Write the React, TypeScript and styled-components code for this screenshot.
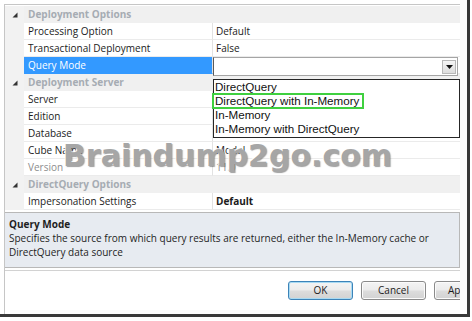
import React from "react";
import styled, { createGlobalStyle } from "styled-components";

const Global = createGlobalStyle`
  * { box-sizing: border-box; }
  body {
    margin: 0;
    background: #fff;
    font-family: "Open Sans", "Noto Sans", sans-serif;
  }
`;

const Frame = styled.div`
  position: relative;
  width: 470px;
  height: 317px;
  padding: 4px 7px 0 4px;
  background: #fff;
  border-right: 3px solid #3a3a3a;
  border-bottom: 3px solid #3a3a3a;
`;

const Dialog = styled.div`
  display: flex;
  flex-direction: column;
  height: 100%;
  border-top: 1px solid #c6c6c6;
  border-left: 1px solid #c6c6c6;
  overflow: hidden;
`;

const Grid = styled.div`
  padding-top: 1px;
  font-size: 10px;
  color: #1b1b1b;
`;

const Row = styled.div`
  display: grid;
  grid-template-columns: 19px 189px 1fr;
  height: 17px;
  line-height: 16px;
`;

const Gutter = styled.div`
  display: flex;
  align-items: center;
  justify-content: center;
  background: #f2f2f2;
`;

const CategoryBar = styled.div`
  grid-column: 2 / 4;
  background: #f0f0f0;
  padding-left: 4px;
  font-weight: 700;
  color: #a6acb3;
`;

const Name = styled.div<{ $selected?: boolean; $muted?: boolean }>`
  padding-left: 4px;
  background: ${(p) => (p.$selected ? "#3399ff" : "#fff")};
  color: ${(p) => (p.$selected ? "#fff" : p.$muted ? "#8d8d8d" : "#1b1b1b")};
  border-bottom: 1px solid ${(p) => (p.$selected ? "#3399ff" : "#ebebeb")};
  border-right: 1px solid #e2e2e2;
  white-space: nowrap;
`;

const Value = styled.div<{ $bold?: boolean; $muted?: boolean }>`
  position: relative;
  padding-left: 3px;
  border-bottom: 1px solid #ebebeb;
  font-weight: ${(p) => (p.$bold ? 700 : 400)};
  color: ${(p) => (p.$muted ? "#8d8d8d" : "#1b1b1b")};
`;

const Combo = styled.div`
  position: absolute;
  left: 0;
  top: 0;
  right: 2px;
  height: 19px;
  background: #fff;
  border: 1px solid #a5a5a5;
  border-left-color: #5a5a5a;
  z-index: 2;
  display: flex;
  justify-content: flex-end;
  align-items: center;
  padding-right: 1px;
`;

const DropButton = styled.div`
  width: 14px;
  height: 14px;
  display: flex;
  align-items: center;
  justify-content: center;
  border: 1px solid #b8b8b8;
  background: linear-gradient(#f6f6f6, #dcdcdc);
`;

const List = styled.div`
  position: absolute;
  left: 0;
  top: 22px;
  width: 247px;
  height: 59px;
  background: #fff;
  border: 1px solid #262626;
  z-index: 3;
  font-family: "Liberation Sans", Arial, sans-serif;
  font-size: 11.6px;
  color: #111;
`;

const Item = styled.div<{ $marked?: boolean }>`
  height: 14px;
  line-height: 14px;
  width: ${(p) => (p.$marked ? "150px" : "auto")};
  margin-left: ${(p) => (p.$marked ? "-1px" : "0")};
  padding-left: ${(p) => (p.$marked ? "2px" : "1px")};
  outline: ${(p) => (p.$marked ? "2px solid #3fd03f" : "none")};
  outline-offset: -1px;
`;

const Description = styled.div`
  margin-top: 2px;
  height: 56px;
  padding: 4px 5px 0 4px;
  background: #e7ebf1;
  border: 1px solid #b8b8b8;
  border-left: none;
  font-size: 10px;
  line-height: 14px;
  color: #1e1e1e;
`;

const DescTitle = styled.div`
  font-weight: 700;
`;

const ButtonBar = styled.div`
  flex: 1;
  margin-top: 2px;
  border-top: 1px solid #d2d2d2;
  display: flex;
  gap: 8px;
  padding: 10px 0 0 283px;
`;

const Button = styled.div<{ $default?: boolean }>`
  flex: none;
  width: 65px;
  height: 19px;
  border: 1px solid ${(p) => (p.$default ? "#3c83b8" : "#8a8a8a")};
  border-radius: 3px;
  background: linear-gradient(#f4f4f4 0%, #ececec 45%, #dcdcdc 55%, #d2d2d2 100%);
  box-shadow: inset 0 0 0 1px ${(p) => (p.$default ? "#a8daf3" : "#fbfbfb")};
  font-size: 10px;
  line-height: 17px;
  text-align: center;
  color: #1b1b1b;
`;

const ApplyButton = styled(Button)`
  text-align: left;
  padding-left: 13px;
`;

const Watermark = styled.div`
  position: absolute;
  left: 63px;
  top: 141px;
  font-family: "DejaVu Sans", sans-serif;
  font-weight: 700;
  font-size: 30px;
  line-height: 30px;
  color: #a6a6a6;
  text-shadow: -1px -1px 0 rgba(255, 255, 255, 0.85), 1px 1px 1px rgba(80, 80, 80, 0.55);
  pointer-events: none;
  white-space: nowrap;
  z-index: 5;
`;

const Expander = () => (
  <svg width="6" height="6" viewBox="0 0 6 6">
    <polygon points="5.5,0.5 5.5,5.5 0.5,5.5" fill="#333" />
  </svg>
);

const Category: React.FC<{ title: string }> = ({ title }) => (
  <Row>
    <Gutter>
      <Expander />
    </Gutter>
    <CategoryBar>{title}</CategoryBar>
  </Row>
);

const Prop: React.FC<{ name: string; value?: string; bold?: boolean; muted?: boolean }> = ({
  name,
  value,
  bold,
  muted,
}) => (
  <Row>
    <Gutter />
    <Name $muted={muted}>{name}</Name>
    <Value $bold={bold} $muted={muted}>
      {value}
    </Value>
  </Row>
);

const options = [
  "DirectQuery",
  "DirectQuery with In-Memory",
  "In-Memory",
  "In-Memory with DirectQuery",
];

export default function App() {
  return (
    <>
      <Global />
      <Frame>
        <Dialog>
          <Grid>
            <Category title="Deployment Options" />
            <Prop name="Processing Option" value="Default" />
            <Prop name="Transactional Deployment" value="False" />
            <Row>
              <Gutter />
              <Name $selected>Query Mode</Name>
              <Value>
                <Combo>
                  <DropButton>
                    <svg width="7" height="4" viewBox="0 0 7 4">
                      <polygon points="0,0 7,0 3.5,4" fill="#111" />
                    </svg>
                  </DropButton>
                </Combo>
                <List>
                  {options.map((o, i) => (
                    <Item key={o} $marked={i === 1}>
                      {o}
                    </Item>
                  ))}
                </List>
              </Value>
            </Row>
            <Category title="Deployment Server" />
            <Prop name="Server" />
            <Prop name="Edition" />
            <Prop name="Database" />
            <Prop name="Cube Name" value="Model" />
            <Prop name="Version" value="11.0" muted />
            <Category title="DirectQuery Options" />
            <Prop name="Impersonation Settings" value="Default" bold />
          </Grid>
          <Description>
            <DescTitle>Query Mode</DescTitle>
            <div>
              Specifies the source from which query results are returned, either the In-Memory cache or
              DirectQuery data source
            </div>
          </Description>
          <ButtonBar>
            <Button $default>OK</Button>
            <Button>Cancel</Button>
            <ApplyButton>Apply</ApplyButton>
          </ButtonBar>
        </Dialog>
        <Watermark>Braindump2go.com</Watermark>
      </Frame>
    </>
  );
}
